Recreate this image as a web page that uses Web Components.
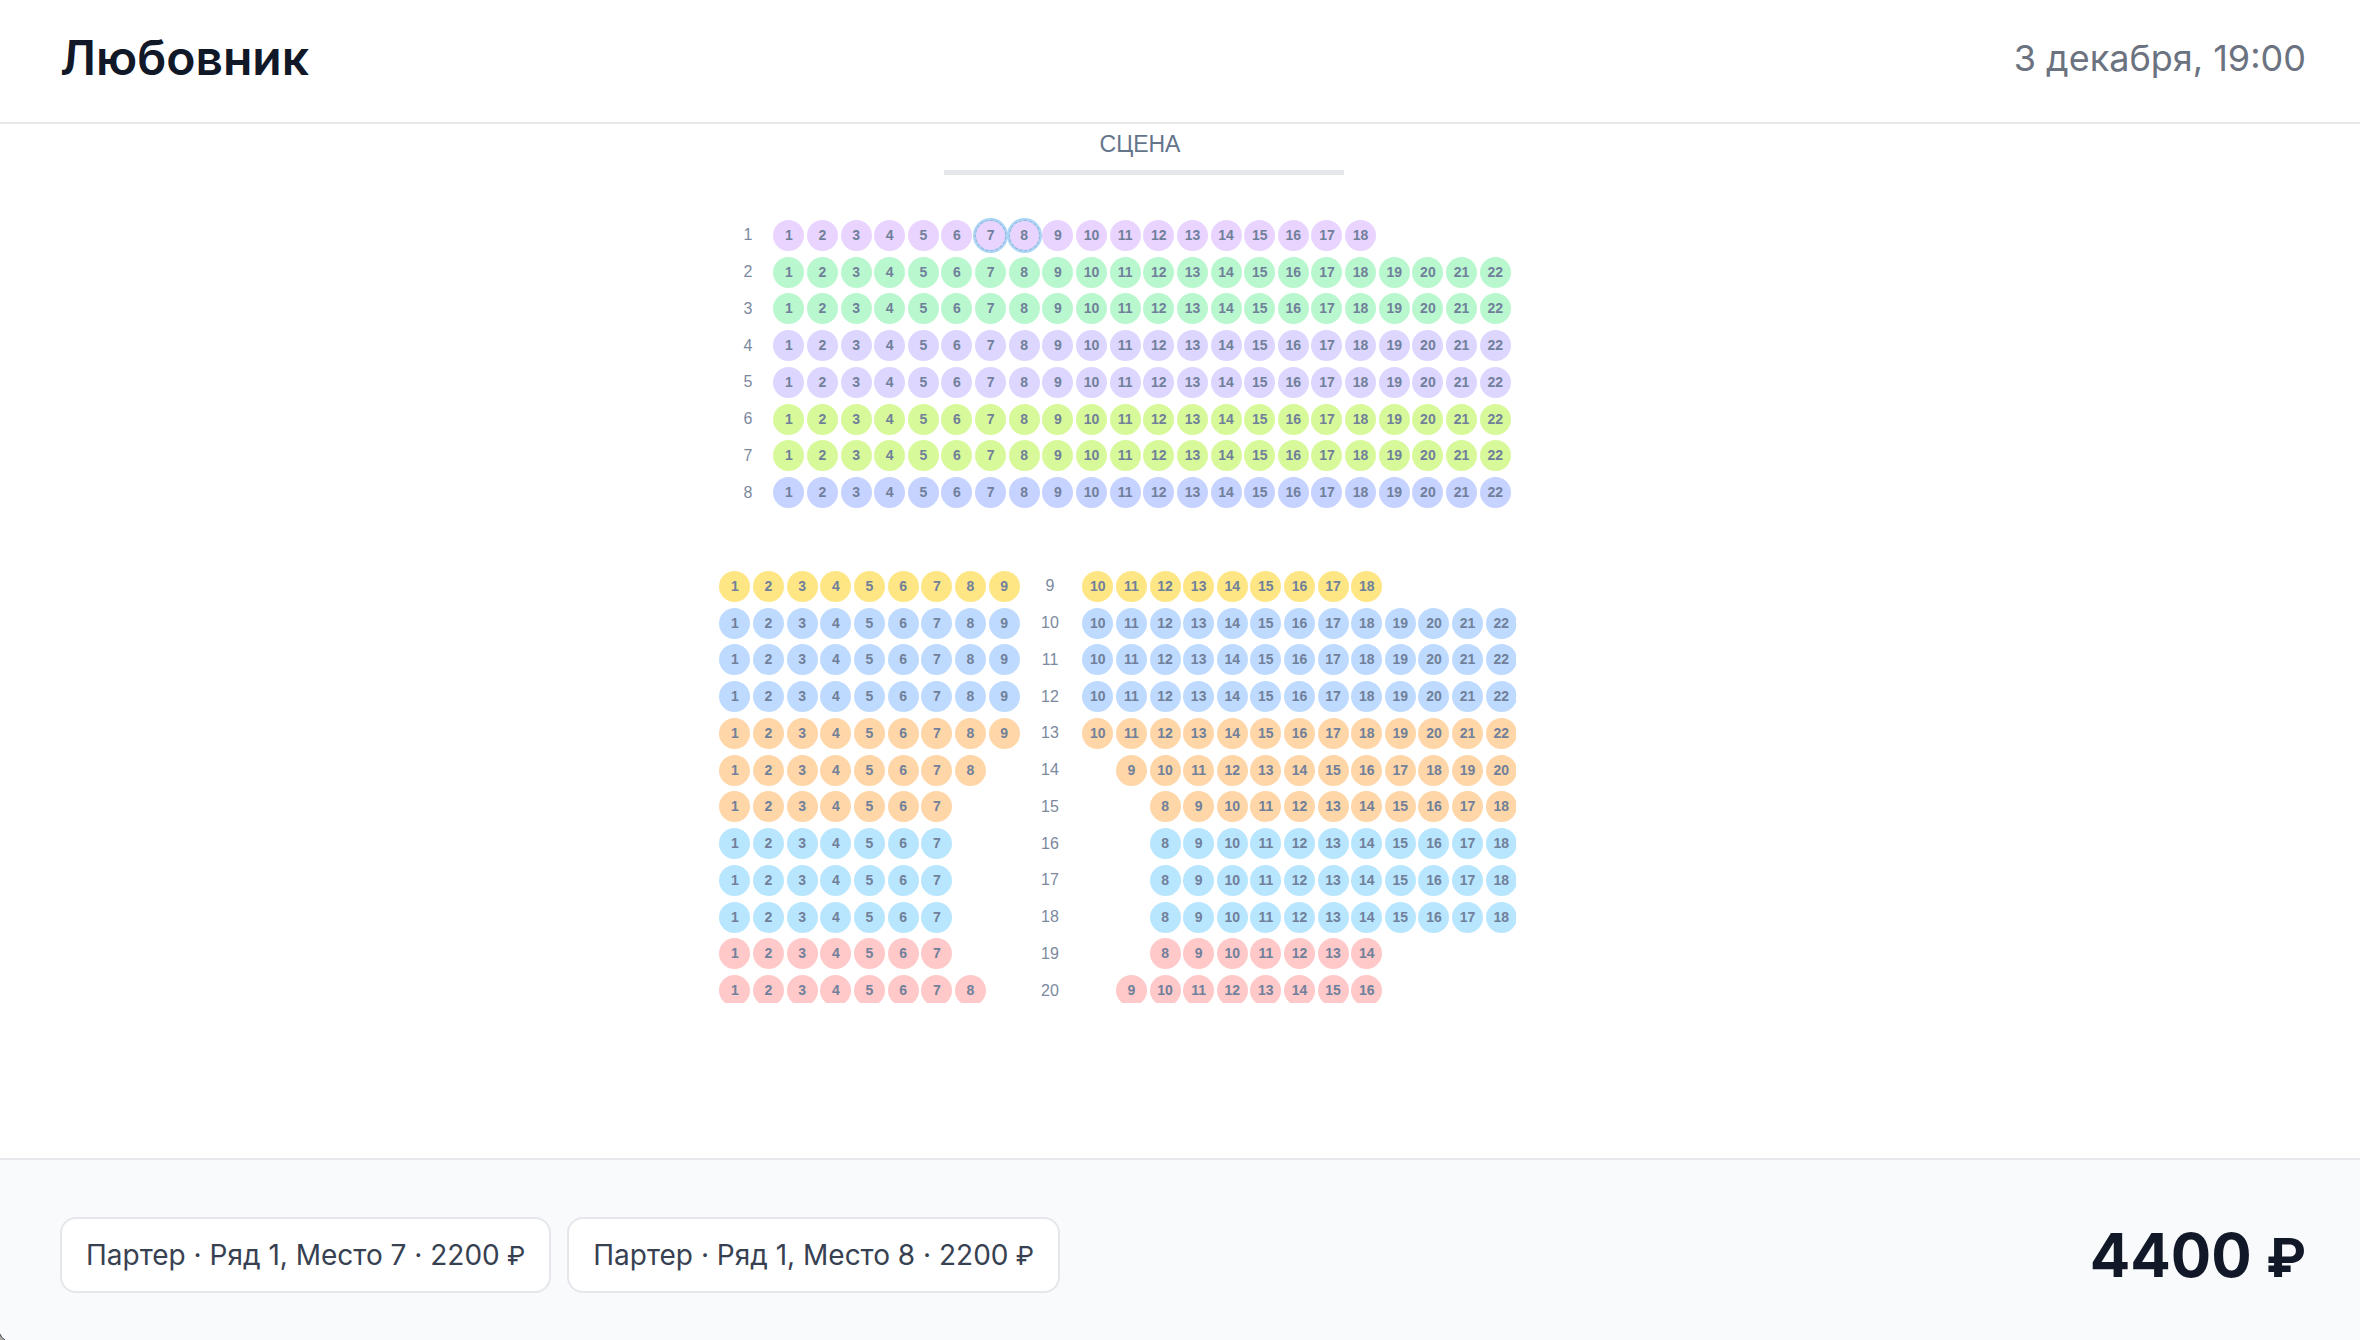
<!DOCTYPE html>
<html lang="ru">
<head>
<meta charset="utf-8">
<title>Любовник</title>
<style>
  html, body { margin: 0; height: 100%; }
  body { font-family: Inter, "Noto Sans", sans-serif; color: #111827; background: #fff; overflow: hidden; }
</style>
</head>
<body>
<booking-page></booking-page>

<template id="t-page">
  <style>
    :host { display: flex; flex-direction: column; min-height: 100vh; position: relative; }
    seat-map { flex: 1; }
    .corner { position: absolute; left: 0; bottom: 0; width: 5px; height: 7px; display: block; }
    ticket-chip .rub { font-size: 26px; line-height: 1; }
    [slot="total"] .rub { font-size: 54px; line-height: 1; }
  </style>
  <event-header>
    <span slot="title">Любовник</span>
    <time slot="date" datetime="12-03T19:00">3 декабря, 19:00</time>
  </event-header>
  <seat-map></seat-map>
  <order-bar>
    <ticket-chip>Партер · Ряд 1, Место 7 · 2200<span class="rub"> ₽</span></ticket-chip>
    <ticket-chip>Партер · Ряд 1, Место 8 · 2200<span class="rub"> ₽</span></ticket-chip>
    <span slot="total">4400 <span class="rub">₽</span></span>
  </order-bar>
  <svg class="corner" viewBox="0 0 5 7" aria-hidden="true"><path d="M0 1 Q1 5 5 7 H0Z" fill="#b5aea4"/><path d="M0 1 Q1 5 5 7" fill="none" stroke="#374151"/></svg>
</template>

<template id="t-header">
  <style>
    :host { display: block; border-bottom: 2px solid #e5e7eb; }
    header { display: flex; justify-content: space-between; align-items: center; padding: 28px 54px 34px 60px; }
    h1 { margin: 0; font-size: 48px; line-height: 60px; font-weight: 600; }
    .date { font-size: 36px; line-height: 60px; color: #6b7280; }
  </style>
  <header><h1><slot name="title"></slot></h1><div class="date"><slot name="date"></slot></div></header>
</template>

<template id="t-order">
  <style>
    :host { display: block; background: #f9fafb; border-top: 2px solid #e5e7eb; }
    footer { display: flex; justify-content: space-between; align-items: center; padding: 57px 54px 47px 60px; }
    .chips { display: flex; gap: 16px; }
    .total { font-size: 60px; line-height: 76px; font-weight: 700; white-space: nowrap; }
  </style>
  <footer><div class="chips"><slot></slot></div><div class="total"><slot name="total"></slot></div></footer>
</template>

<template id="t-chip">
  <style>
    :host { display: block; box-sizing: border-box; padding: 16px 24px; border: 2px solid #e5e7eb; border-radius: 16px;
      background: #fff; color: #374151; font-size: 28px; line-height: 40px; white-space: nowrap; }
  </style>
  <slot></slot>
</template>

<template id="t-map">
  <style>
    :host { display: flex; justify-content: center; align-items: flex-start; font-family: "Liberation Sans", Arial, sans-serif; }
    .plan { width: 924px; }
    .hall { width: 798px; height: 879px; overflow: hidden; }
    .stage { width: 400px; margin-left: 226px; padding-top: 4px; border-bottom: 5px solid #e5e7eb; text-align: center;
      font-size: 23px; line-height: 32px; height: 42px; color: #64748b; }
    .stage span { margin-right: 8px; }
    .rows { display: grid; grid-auto-rows: 1fr; }
    .front { height: 294px; margin-top: 42px; }
    .back { height: 441px; margin-top: 57px; }
  </style>
  <main class="plan"><div class="hall">
    <div class="stage"><span>СЦЕНА</span></div>
    <div class="rows front"></div>
    <div class="rows back"></div>
  </div></main>
</template>

<template id="t-row">
  <style>
    :host { display: grid; align-items: center; }
    :host([part-of="front"]) { grid-template-columns: 40px 740px; column-gap: 4px; padding-left: 10px; }
    :host([part-of="back"]) { grid-template-columns: 303px 60px 437px; }
    .label { text-align: center; font-size: 16px; line-height: 20px; color: #7b899e; }
    :host([part-of="back"]) .label { order: 1; padding-right: 2px; }
    seat-block.right { order: 2; }
  </style>
  <span class="label"></span>
</template>

<template id="t-block">
  <style>
    :host { display: grid; justify-items: center; align-items: center; }
    button { width: 31px; height: 31px; padding: 0; border: 0; border-radius: 50%; background: var(--tone);
      font: 700 14px/31px "Liberation Sans", Arial, sans-serif; color: #71809a; text-align: center; cursor: pointer; }
    button[aria-pressed="true"] { box-shadow: 0 0 0 2px #a9d4f5, inset 0 0 0 1px #a9d4f5;
      outline: 1px dashed #93b4d2; outline-offset: -1px; }
  </style>
</template>

<script>
  const stamp = (host, id) => {
    const root = host.attachShadow({ mode: "open" });
    root.append(document.getElementById(id).content.cloneNode(true));
    return root;
  };
  const simple = (name, id) => customElements.define(name, class extends HTMLElement {
    constructor() { super(); stamp(this, id); }
  });

  // A run of consecutive seats laid over a fixed number of columns.
  customElements.define("seat-block", class extends HTMLElement {
    connectedCallback() {
      if (this.shadowRoot) return;
      const root = stamp(this, "t-block");
      const { from, to, columns, skip, row, selected } = this.dataset;
      this.style.gridTemplateColumns = `repeat(${columns}, 1fr)`;
      const chosen = (selected || "").split(",");
      for (let n = +from; n <= +to; n++) {
        const seat = document.createElement("button");
        seat.type = "button";
        seat.textContent = n;
        seat.setAttribute("aria-label", `Ряд ${row}, Место ${n}`);
        seat.setAttribute("aria-pressed", chosen.includes(String(n)));
        if (n === +from) seat.style.gridColumnStart = +skip + 1;
        seat.addEventListener("click", () =>
          seat.setAttribute("aria-pressed", seat.getAttribute("aria-pressed") !== "true"));
        root.append(seat);
      }
    }
  });

  customElements.define("seat-row", class extends HTMLElement {
    set row(data) {
      const root = stamp(this, "t-row");
      root.querySelector(".label").textContent = data.n;
      this.style.setProperty("--tone", data.tone);
      data.blocks.forEach(([from, to, columns, skip], i) => {
        const block = document.createElement("seat-block");
        Object.assign(block.dataset, { from, to, columns, skip, row: data.n, selected: data.selected || "" });
        if (i) block.className = "right";
        root.append(block);
      });
    }
  });

  const tones = { purple: "#e9d4ff", green: "#b9f8cf", violet: "#ddd6ff", lime: "#d8f999", indigo: "#c6d2ff",
    amber: "#fee685", blue: "#bedbff", orange: "#ffd6a7", sky: "#b8e6fe", red: "#ffc9c9" };
  const front = [["purple", 18], ["green", 22], ["green", 22], ["violet", 22], ["violet", 22], ["lime", 22], ["lime", 22], ["indigo", 22]];
  // tone, last seat on the left, last seat on the right, empty places before the right part
  const back = [["amber", 9, 18, 0], ["blue", 9, 22, 0], ["blue", 9, 22, 0], ["blue", 9, 22, 0], ["orange", 9, 22, 0],
    ["orange", 8, 20, 1], ["orange", 7, 18, 2], ["sky", 7, 18, 2], ["sky", 7, 18, 2], ["sky", 7, 18, 2],
    ["red", 7, 14, 2], ["red", 8, 16, 1]];

  customElements.define("seat-map", class extends HTMLElement {
    constructor() {
      super();
      const root = stamp(this, "t-map");
      const add = (part, data) => {
        const row = document.createElement("seat-row");
        row.setAttribute("part-of", part);
        row.row = data;
        root.querySelector("." + part).append(row);
      };
      front.forEach(([tone, last], i) =>
        add("front", { n: i + 1, tone: tones[tone], blocks: [[1, last, 22, 0]], selected: i ? "" : "7,8" }));
      back.forEach(([tone, left, right, skip], i) =>
        add("back", { n: i + 9, tone: tones[tone], blocks: [[1, left, 9, 0], [left + 1, right, 13, skip]] }));
    }
  });

  simple("event-header", "t-header");
  simple("ticket-chip", "t-chip");
  simple("order-bar", "t-order");
  simple("booking-page", "t-page");
</script>
</body>
</html>
